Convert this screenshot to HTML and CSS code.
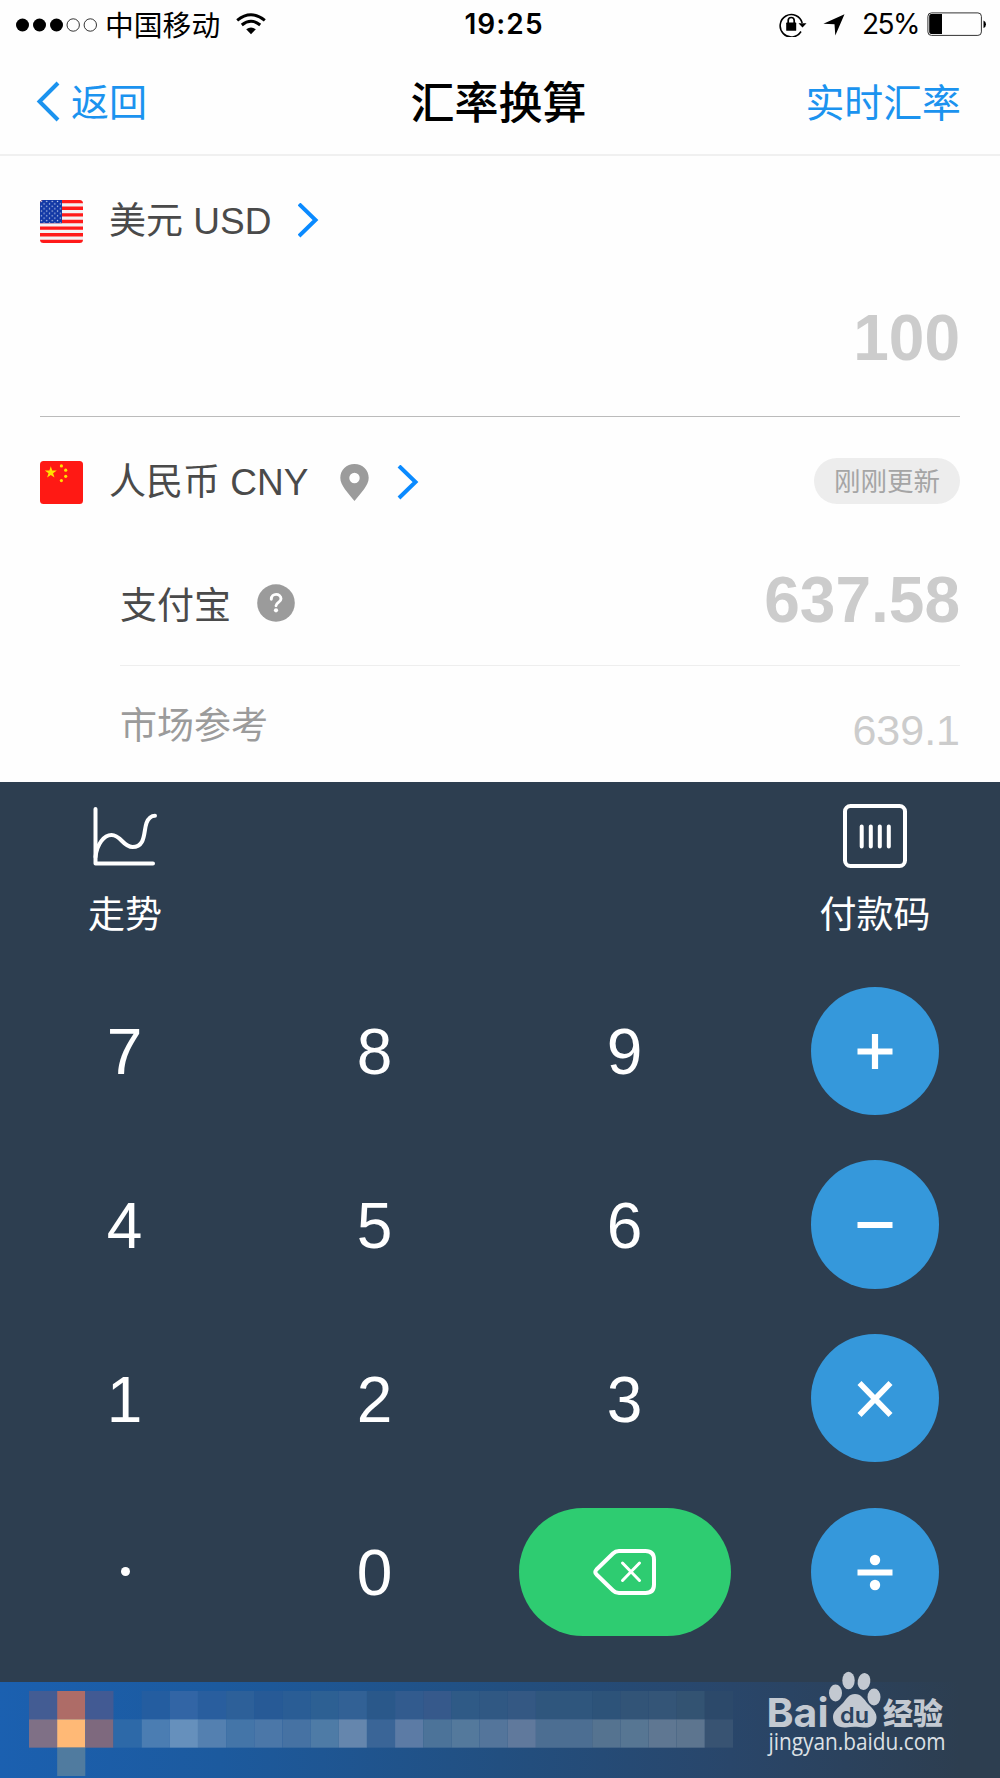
FILE: index.html
```html
<!DOCTYPE html>
<html lang="zh-CN">
<head>
<meta charset="utf-8">
<title>汇率换算</title>
<link rel="stylesheet" href="styles.css">
</head>
<body>
<header class="status">
  <div class="status-left">
    <svg class="signal" width="82" height="14" viewBox="0 0 82 14"><circle cx="6.500" cy="7" r="6.500"/><circle cx="23.500" cy="7" r="6.500"/><circle cx="40.500" cy="7" r="6.500"/><g fill="none" stroke="#000" stroke-width=".8"><circle cx="57.200" cy="7" r="6.200"/><circle cx="74.300" cy="7" r="6.200"/></g></svg>
    <span class="carrier">中国移动</span>
    <svg class="wifi" width="30" height="22" viewBox="0 0 30 22"><path d="M15 21.200 10.200 16.300Q15 12.600 19.800 16.300Z"/><g fill="none" stroke="#000" stroke-width="3"><path d="M5.800 12Q15 4.400 24.200 12"/><path d="M1.200 7.300Q15-3.800 28.800 7.300"/></g></svg>
  </div>
  <span class="clock">19:25</span>
  <div class="status-right">
    <svg width="28" height="25" viewBox="0 0 28 25"><path d="M22 19.500A11.200 11.200 0 1 1 23.200 11" fill="none" stroke="#000" stroke-width="1.600"/><path d="M19.500 11.200H27.500L23.500 15.500Z"/><rect x="7.200" y="10.600" width="10" height="8.200" rx=".6"/><path d="M9.200 11V8.500a3 3 0 0 1 6 0V11" fill="none" stroke="#000" stroke-width="1.700"/></svg>
    <svg class="locate" width="22" height="22" viewBox="0 0 22 22"><path d="M21.500.3 12.300 21.500 11.500 10.300.4 9.700Z"/></svg>
    <span class="percent">25%</span>
    <svg class="battery" width="60" height="25" viewBox="0 0 60 25"><rect x=".9" y=".9" width="53.500" height="22.500" rx="3.500" fill="none" stroke="#333" stroke-width="1"/><path d="M2.200 4a2 2 0 0 1 2-2H15V22H4.200a2 2 0 0 1-2-2Z"/><path d="M56.500 8.500Q59 9.500 59 12.300T56.500 16Z"/></svg>
  </div>
</header>
<nav class="nav">
  <a class="back"><svg width="24" height="42" viewBox="0 0 24 42"><path d="M22 2 3.500 20.500 22 39" fill="none" stroke="#1b93ef" stroke-width="4"/></svg><span>返回</span></a>
  <h1 class="title">汇率换算</h1>
  <a class="live">实时汇率</a>
</nav>
<main class="converter">
  <section class="source">
    <div class="currency">
      <svg class="flag" width="43" height="43" viewBox="0 0 43 43"><defs><clipPath id="round"><rect width="43" height="43" rx="3.500"/></clipPath><pattern id="stars" width="5.400" height="4.800" patternUnits="userSpaceOnUse"><g fill="#d5def2"><circle cx="1.400" cy="1.400" r=".7"/><circle cx="4.100" cy="3.800" r=".7"/></g></pattern></defs><g clip-path="url(#round)"><rect width="43" height="43" fill="#f4f2f3"/><path d="M0 1.650H43M0 8.270H43M0 14.880H43M0 21.500H43M0 28.120H43M0 34.730H43M0 41.350H43" stroke="#ff1a1a" stroke-width="3.300"/><rect width="22" height="23.200" fill="#1238a5"/><rect width="22" height="23.200" fill="url(#stars)"/></g></svg>
      <span class="currency-name">美元 USD</span>
      <svg class="chevron" width="22" height="36" viewBox="0 0 22 36"><path d="M1 1 17.500 17 1 33" fill="none" stroke="#0a8aff" stroke-width="4"/></svg>
    </div>
    <div class="amount amount-source">100</div>
  </section>
  <section class="target">
    <div class="currency currency-target">
      <svg class="flag" width="43" height="43" viewBox="0 0 43 43"><rect width="43" height="43" rx="3.500" fill="#ff1914"/><g fill="#ffe100"><path d="M10.800 5.200 12.200 9.500H16.800L13.100 12.200 14.500 16.500 10.800 13.900 7.100 16.500 8.500 12.200 4.800 9.500H9.400Z"/><circle cx="21.400" cy="4.900" r="1.600"/><circle cx="25.700" cy="9.200" r="1.600"/><circle cx="25.700" cy="15.300" r="1.600"/><circle cx="21.400" cy="19.600" r="1.600"/></g></svg>
      <span class="currency-name">人民币 CNY</span>
      <svg class="pin" width="29" height="38" viewBox="0 0 29 38"><path fill="#9b9b9b" fill-rule="evenodd" d="M14.500 0C6.500 0 .3 6 .3 13.700.3 21.500 8 28.500 14.500 37 21 28.500 28.700 21.500 28.700 13.700 28.700 6 22.500 0 14.500 0ZM14.500 8.800a5.200 5.200 0 1 1 0 10.400 5.200 5.200 0 0 1 0-10.400Z"/></svg>
      <svg class="chevron" width="22" height="36" viewBox="0 0 22 36"><path d="M2 1 18.500 17 2 33" fill="none" stroke="#0a8aff" stroke-width="4"/></svg>
      <span class="updated">刚刚更新</span>
    </div>
    <div class="rate">
      <span>支付宝</span>
      <svg class="help" width="38" height="38" viewBox="0 0 38 38"><circle cx="19" cy="19" r="18.800" fill="#9b9b9b"/><path d="M14.300 15.200C14.300 8.700 24 9 24 14.800 24 18.500 19 18.200 19 21.800" fill="none" stroke="#fff" stroke-width="2.900" stroke-linecap="round"/><circle cx="19" cy="26.300" r="2.100" fill="#fff"/></svg>
      <span class="amount">637.58</span>
    </div>
    <div class="rate market">
      <span>市场参考</span>
      <span class="market-value">639.1</span>
    </div>
  </section>
</main>
<section class="panel">
  <div class="tools">
    <div class="tool"><svg width="66" height="66" viewBox="0 0 66 66" fill="none" stroke="#fff" stroke-width="4" stroke-linecap="round" stroke-linejoin="round"><path d="M3.500 6V60.500H61"/><path d="M3.500 54C5 41 12 32 19.500 32 29 32 31 44 40.500 44 54 44 51.500 28 54.500 20 56.500 15 59 12.800 63 12.800"/></svg><span>走势</span></div>
    <div class="tool tool-pay"><svg width="66" height="66" viewBox="0 0 66 66" fill="none" stroke="#fff" stroke-width="4" stroke-linecap="round"><rect x="3" y="3" width="60" height="60" rx="5.500"/><path d="M19.700 23.500V43.500M28.800 23.500V43.500M37.800 23.500V43.500M46.800 23.500V43.500"/></svg><span>付款码</span></div>
  </div>
  <div class="keys">
    <span class="key">7</span><span class="key">8</span><span class="key">9</span>
    <span class="op"><svg width="38" height="38" viewBox="0 0 38 38"><path d="M1.500 19.500H36.500M19 2V37"/></svg></span>
    <span class="key">4</span><span class="key">5</span><span class="key">6</span>
    <span class="op"><svg width="38" height="38" viewBox="0 0 38 38"><path d="M1.500 20H36.500"/></svg></span>
    <span class="key">1</span><span class="key">2</span><span class="key">3</span>
    <span class="op"><svg width="38" height="38" viewBox="0 0 38 38"><path class="op-times" d="M3.500 4 34.500 36M34.500 4 3.500 36"/></svg></span>
    <span class="dot"></span><span class="key">0</span>
    <span class="erase"><svg width="64" height="48" viewBox="0 0 64 48" fill="none" stroke="#fff" stroke-width="4" stroke-linejoin="round" stroke-linecap="round"><path d="M26 3H52.500Q61 3 61 11.500V36.500Q61 45 52.500 45H26Q22.500 45 20 42.500L3.500 26.500Q1.200 24 3.500 21.500L20 5.500Q22.500 3 26 3Z"/><path stroke-width="3" d="M29.500 15 46.500 32.500M46.500 15 29.500 32.500"/></svg></span>
    <span class="op"><svg width="38" height="38" viewBox="0 0 38 38"><path d="M1.500 19.500H36.500"/><g class="op-dots"><circle cx="19" cy="7" r="5.200"/><circle cx="19" cy="32" r="5.200"/></g></svg></span>
  </div>
</section>
<footer class="banner">
  <svg class="mosaic" width="704" height="85" viewBox="0 0 25 3" preserveAspectRatio="none">
    <g id="row-top"><path fill="#435c93" d="M0 0h1v1h-1z"/><path fill="#ae6c67" d="M1 0h1v1h-1z"/><path fill="#425a93" d="M2 0h1v1h-1z"/><path fill="#245da0" d="M4 0h1v1h-1z"/><path fill="#3265a5" d="M5 0h1v1h-1z"/><path fill="#295e9e" d="M6 0h1v1h-1z"/><path fill="#2d6099" d="M7 0h1v1h-1z"/><path fill="#275a96" d="M8 0h1v1h-1z"/><path fill="#2a5d95" d="M9 0h1v1h-1z"/><path fill="#2d6093" d="M10 0h1v1h-1z"/><path fill="#326195" d="M11 0h1v1h-1z"/><path fill="#2a588a" d="M12 0h1v1h-1z"/><path fill="#325b8e" d="M13 0h1v1h-1z"/><path fill="#36598b" d="M14 0h1v1h-1z"/><path fill="#2f5a86" d="M15 0h1v1h-1z"/><path fill="#305883" d="M16 0h1v1h-1z"/><path fill="#345883" d="M17 0h1v1h-1z"/><path fill="#2f567d" d="M18 0h2v1h-2z"/><path fill="#2d5379" d="M20 0h1v1h-1z"/><path fill="#325477" d="M21 0h1v1h-1z"/><path fill="#345577" d="M22 0h1v1h-1z"/><path fill="#335372" d="M23 0h1v1h-1z"/><path fill="#2c496a" d="M24 0h1v1h-1z"/></g>
    <g id="row-middle"><path fill="#7f7086" d="M0 1h1v1h-1z"/><path fill="#ffb976" d="M1 1h1v1h-1z"/><path fill="#7e697e" d="M2 1h1v1h-1z"/><path fill="#2d69a8" d="M3 1h1v1h-1z"/><path fill="#4b7db2" d="M4 1h1v1h-1z"/><path fill="#6690bc" d="M5 1h1v1h-1z"/><path fill="#5480b0" d="M6 1h1v1h-1z"/><path fill="#4475a8" d="M7 1h1v1h-1z"/><path fill="#4b77a8" d="M8 1h1v1h-1z"/><path fill="#4672a3" d="M9 1h1v1h-1z"/><path fill="#4e7ba6" d="M10 1h1v1h-1z"/><path fill="#6586ad" d="M11 1h1v1h-1z"/><path fill="#3a6597" d="M12 1h1v1h-1z"/><path fill="#5c7ba5" d="M13 1h1v1h-1z"/><path fill="#4c7399" d="M14 1h1v1h-1z"/><path fill="#54799c" d="M15 1h1v1h-1z"/><path fill="#54759b" d="M16 1h1v1h-1z"/><path fill="#60799c" d="M17 1h1v1h-1z"/><path fill="#4c6e92" d="M18 1h2v1h-2z"/><path fill="#557390" d="M20 1h1v1h-1z"/><path fill="#577693" d="M21 1h1v1h-1z"/><path fill="#5f7792" d="M22 1h1v1h-1z"/><path fill="#5d758f" d="M23 1h1v1h-1z"/><path fill="#385372" d="M24 1h1v1h-1z"/></g>
    <path fill="#507b9f" d="M1 2h1v1h-1z"/>
  </svg>
  <svg class="watermark" width="190" height="90" viewBox="0 0 190 90" fill="#c3c9d1">
    <text class="wm-bai" x="6.500" y="56.500" textLength="62" lengthAdjust="spacingAndGlyphs">Bai</text>
    <ellipse cx="75.500" cy="23" rx="6.500" ry="8.500"/><ellipse cx="88.500" cy="10.500" rx="6.200" ry="8.700"/><ellipse cx="104" cy="11.500" rx="6.300" ry="8.500" transform="rotate(10 104 11.500)"/><ellipse cx="114" cy="27" rx="6.500" ry="8.500"/>
    <path d="M95 24C101 24 104 29 108 34 113 39 117 43 116.500 48 116 55 111 58 104 57.500 97 56.500 92 56.500 86 57.500 78 58 73 54 73 47 73 41 78 38 83 33 87 28 89 24 95 24Z"/>
    <text class="wm-du" x="80" y="53" textLength="29" lengthAdjust="spacingAndGlyphs">du</text>
    <text class="wm-cn" x="123" y="54" textLength="60" lengthAdjust="spacingAndGlyphs">经验</text>
    <text class="wm-url" x="8.500" y="80" textLength="177" lengthAdjust="spacingAndGlyphs">jingyan.baidu.com</text>
  </svg>
</footer>
</body>
</html>
```
FILE: styles.css
```css
* { box-sizing: border-box; }
body {
  margin: 0;
  width: 1000px;
  height: 1778px;
  display: flex;
  flex-direction: column;
  overflow: hidden;
  background: #fefefe;
  color: #4a4a4a;
  font-family: "Liberation Sans", "Noto Sans CJK SC", sans-serif;
  font-weight: 400;
}
svg { display: block; flex: none; }

.status {
  height: 48px;
  padding: 0 13px 0 16px;
  display: grid;
  grid-template-columns: 1fr auto 1fr;
  align-items: center;
  color: #000;
  line-height: 48px;
}
.status-left, .status-right { display: flex; align-items: center; height: 48px; }
.status-right { justify-content: flex-end; }
.carrier { margin-left: 7px; padding-bottom: 2px; font-size: 28.8px; font-family: "Noto Sans CJK SC", sans-serif; line-height: 46px; }
.wifi { margin: 0 0 2px 16px; }
.clock { font: 600 28px/49px Inter, sans-serif; letter-spacing: 1.1px; padding-left: 5px; }
.locate { margin-left: 16px; }
.percent { margin-left: 17px; font: 400 28px/51px Inter, sans-serif; letter-spacing: -1.5px; }
.battery { margin-left: 8px; }

.nav {
  height: 108px;
  padding: 0 39px 2px 36px;
  border-bottom: 2px solid #f0f0f0;
  display: grid;
  grid-template-columns: 1fr auto 1fr;
  align-items: center;
  font-family: "Noto Sans CJK SC", sans-serif;
  font-size: 38.9px;
  line-height: 104px;
  color: #1b93ef;
}
.back { display: flex; align-items: center; gap: 11px; font-size: 38px; }
.back svg { margin-top: 3px; }
.title { margin: 0; font-size: 44px; font-weight: 500; color: #000; }
.live { text-align: right; }

.converter { height: 626px; padding: 0 40px; }
.source { height: 261px; border-bottom: 1px solid #bbb; }
.currency { display: flex; align-items: center; padding-top: 43px; height: 87px; }
.currency-name { margin-left: 26px; padding-top: 1px; font-size: 37px; line-height: 44px; white-space: pre; }
.chevron { margin-left: 27px; }
.amount { font-size: 64px; font-weight: 700; line-height: 74px; color: #ccc; text-align: right; }
.amount-source { margin-top: 58px; }
.currency-target { padding-top: 44px; }
.pin { margin-left: 32px; }
.pin + .chevron { margin-left: 28px; }
.updated {
  margin: 0 0 3px auto;
  width: 146px;
  height: 46px;
  border-radius: 23px;
  background: #ededed;
  color: #a5a5a5;
  font-size: 26.5px;
  line-height: 48px;
  text-align: center;
}
.rate {
  height: 162px;
  margin-left: 80px;
  padding-top: 38px;
  border-bottom: 1px solid #eee;
  display: flex;
  align-items: center;
  font-size: 37px;
}
.rate > span:first-child { padding-bottom: 2px; }
.help { margin: 0 0 2px 26px; }
.rate .amount { margin-left: auto; padding-bottom: 7px; }
.market { height: 116px; padding-top: 0; border: 0; color: #9b9b9b; }
.rate .market-value { margin-left: auto; padding-top: 12px; font-size: 43px; color: #ccc; }

.panel { height: 900px; background: #2d3e50; color: #fff; }
.tools { height: 182px; padding-top: 21px; display: flex; justify-content: space-between; }
.tool { width: 250px; display: flex; flex-direction: column; align-items: center; font-size: 37px; line-height: 54px; gap: 20px; }
.keys { display: grid; grid-template: repeat(4, 173.67px) / repeat(4, 250px); place-items: center; }
.key { font-size: 64px; line-height: 74px; padding: 3px 1px 0 0; }
.op, .erase { display: flex; align-items: center; justify-content: center; height: 128.6px; border-radius: 65px; }
.op { width: 128.6px; background: #3598db; }
.op path { fill: none; stroke: #fff; stroke-width: 6.2; }
.op .op-times { stroke-width: 5.6; }
.op-dots { fill: #fff; }
.erase { width: 212px; background: #2ecc71; }
.dot { width: 9px; height: 9px; border-radius: 50%; background: #fff; }

.banner {
  position: relative;
  height: 96px;
  padding: 9px 0 0 29px;
  background: linear-gradient(90deg, #1b60b0, #1c5a9e 22%, #224f80 50%, #29466a 73%, #2d3e50 96%);
}
.watermark { position: absolute; left: 760px; top: -12px; overflow: visible; }
.wm-bai { font: 700 40px Inter, sans-serif; }
.wm-du { font: 600 22px Inter, sans-serif; fill: #2b4360; }
.wm-cn { font: 900 30px "Noto Sans CJK SC", sans-serif; }
.wm-url { font: 400 24px "Open Sans", sans-serif; fill: #dce0e5; }
```
